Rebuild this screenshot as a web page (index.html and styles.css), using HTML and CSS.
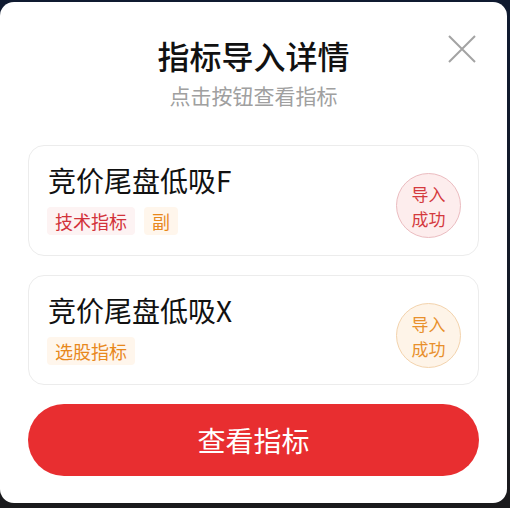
FILE: index.html
```html
<!DOCTYPE html>
<html lang="zh-CN">
<head>
<meta charset="utf-8">
<title>指标导入详情</title>
<link rel="stylesheet" href="styles.css">
</head>
<body>
<div class="backdrop">
  <div class="modal">
    <button class="close" aria-label="关闭">
      <svg width="28" height="28" viewBox="0 0 28 28"><path d="M1 1 L27 27 M27 1 L1 27" stroke="#a3a3a3" stroke-width="2" fill="none"/></svg>
    </button>
    <h1 class="title">指标导入详情</h1>
    <p class="subtitle">点击按钮查看指标</p>

    <div class="card">
      <div class="info">
        <div class="name">竞价尾盘低吸F</div>
        <div class="tags">
          <span class="tag tag-red">技术指标</span>
          <span class="tag tag-orange">副</span>
        </div>
      </div>
      <div class="badge badge-red"><span>导入</span><span>成功</span></div>
    </div>

    <div class="card">
      <div class="info">
        <div class="name">竞价尾盘低吸X</div>
        <div class="tags">
          <span class="tag tag-orange">选股指标</span>
        </div>
      </div>
      <div class="badge badge-orange"><span>导入</span><span>成功</span></div>
    </div>

    <button class="primary">查看指标</button>
  </div>
</div>
</body>
</html>
```
FILE: styles.css
```css
* { box-sizing: border-box; }
html, body {
  margin: 0;
  padding: 0;
  width: 510px;
  height: 508px;
  overflow: hidden;
}
body {
  background: linear-gradient(180deg, #0f1a30 0%, #141a26 60%, #1a1a1c 100%);
  font-family: "Noto Sans CJK SC", "Noto Sans", sans-serif;
}
.backdrop {
  padding-top: 2px;
}
.modal {
  position: relative;
  width: 507px;
  height: 501px;
  background: #fff;
  border-radius: 14px;
  padding: 33px 28px 0 28px;
  display: flex;
  flex-direction: column;
}
.close {
  position: absolute;
  top: 33px;
  right: 31px;
  width: 28px;
  height: 28px;
  padding: 0;
  border: 0;
  background: none;
  display: block;
}
.close svg { display: block; }
.title {
  margin: 0;
  text-align: center;
  font-size: 32px;
  line-height: 40px;
  font-weight: 500;
  color: #111;
}
.subtitle {
  margin: 6px 0 0 0;
  text-align: center;
  font-size: 21px;
  line-height: 28px;
  color: #a0a0a0;
}
.card {
  margin-top: 36px;
  border: 1px solid #ececec;
  border-radius: 16px;
  height: 111px;
  padding: 17px 17px 0 18px;
  display: flex;
  align-items: flex-start;
  justify-content: space-between;
}
.card + .card { margin-top: 19px; height: 110px; }
.name {
  font-size: 28px;
  line-height: 34px;
  color: #111;
  padding-left: 1px;
}
.tags {
  display: flex;
  gap: 9px;
  margin-top: 10px;
}
.tag {
  font-size: 18px;
  line-height: 28px;
  height: 28px;
  padding: 0 8px;
  border-radius: 4px;
}
.tag-red { background: #fdf3f3; color: #d2323a; }
.tag-orange { background: #fff6ec; color: #e8881c; }
.badge {
  width: 65px;
  height: 65px;
  flex: none;
  border-radius: 50%;
  margin-top: 10px;
  display: flex;
  flex-direction: column;
  align-items: center;
  justify-content: center;
  font-size: 17px;
}
.badge span { display: block; height: 25px; line-height: 25px; }
.badge-red { background: #fdeded; border: 1px solid #ebbcc0; color: #d43a3e; }
.badge-orange { background: #fef4e8; border: 1px solid #f3d3ad; color: #e8902c; }
.primary {
  margin-top: 19px;
  height: 72px;
  width: 100%;
  border: 0;
  border-radius: 36px;
  background: #e82e30;
  color: #fff;
  font-family: "Noto Sans CJK SC", "Noto Sans", sans-serif;
  font-size: 28px;
  padding: 0;
}
```
